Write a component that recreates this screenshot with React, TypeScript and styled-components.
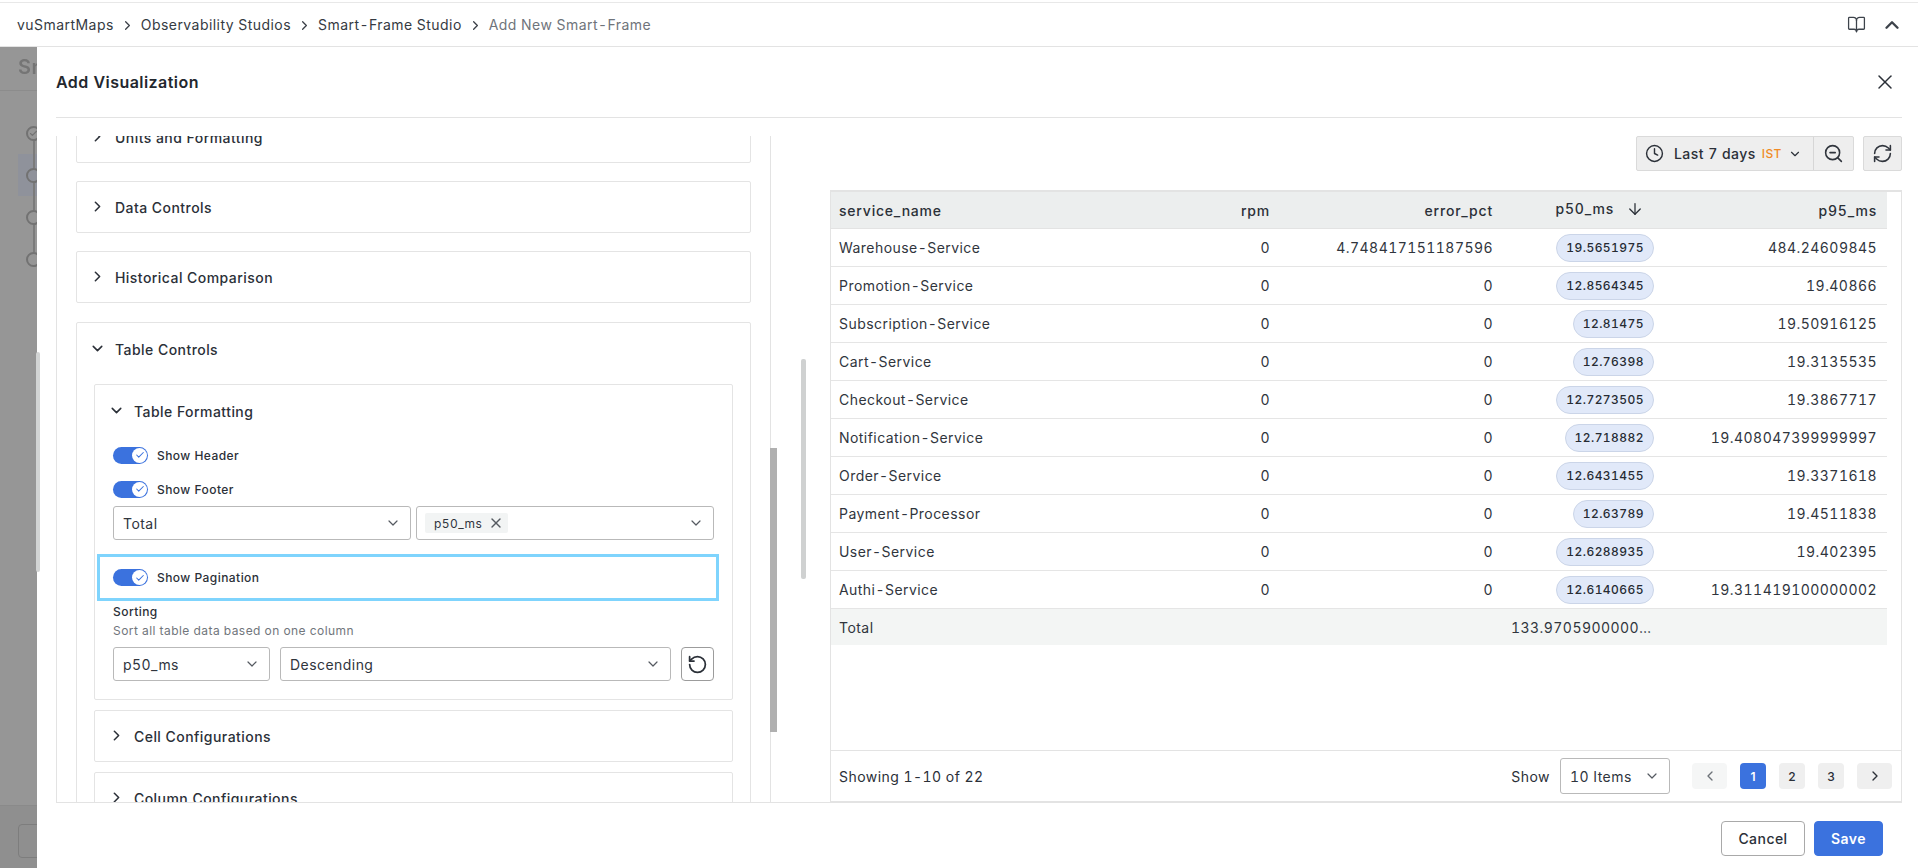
import { createGlobalStyle } from "styled-components";
import styled from "styled-components";
import { ArrowDown, BookOpen, Check, ChevronDown, ChevronLeft, ChevronRight, ChevronUp, Clock, RefreshCw, RotateCcw, X, ZoomOut } from "lucide-react";

const rows = [
  { name: "Warehouse-Service", err: "4.748417151187596", p50: "19.5651975", p95: "484.24609845" },
  { name: "Promotion-Service", err: "0", p50: "12.8564345", p95: "19.40866" },
  { name: "Subscription-Service", err: "0", p50: "12.81475", p95: "19.50916125" },
  { name: "Cart-Service", err: "0", p50: "12.76398", p95: "19.3135535" },
  { name: "Checkout-Service", err: "0", p50: "12.7273505", p95: "19.3867717" },
  { name: "Notification-Service", err: "0", p50: "12.718882", p95: "19.408047399999997" },
  { name: "Order-Service", err: "0", p50: "12.6431455", p95: "19.3371618" },
  { name: "Payment-Processor", err: "0", p50: "12.63789", p95: "19.4511838" },
  { name: "User-Service", err: "0", p50: "12.6288935", p95: "19.402395" },
  { name: "Authi-Service", err: "0", p50: "12.6140665", p95: "19.311419100000002" },
];

const GlobalStyle = createGlobalStyle`
  html, body {
    margin: 0;
    height: 100%;
    overflow: hidden;
    background: #fff;
  }
  * {
    box-sizing: border-box;
  }
  body {
    font-family: Inter, "Noto Sans", sans-serif;
    font-size: 14px;
    letter-spacing: 0.45px;
    font-variant-numeric: tabular-nums;
    color: #2b3038;
  }
`;

const Page = styled.div`
  display: flex;
  flex-direction: column;
  width: 1918px;
  height: 868px;
`;

const TopBar = styled.header`
  display: flex;
  align-items: center;
  justify-content: space-between;
  height: 45px;
  margin-top: 2px;
  padding: 0 15px 0 17px;
  border-top: 1px solid #e8e8e8;
  border-bottom: 1px solid #e3e3e3;
  flex-shrink: 0;
`;

const Crumbs = styled.nav`
  display: flex;
  align-items: center;
  gap: 6px;
  color: #353a42;
  svg {
    color: #3a3f47;
    margin-top: 2px;
  }
`;

const CrumbLast = styled.span`
  color: #6f747b;
`;

const TopIcons = styled.div`
  display: flex;
  align-items: center;
  gap: 15px;
  color: #3d434b;
`;

const Main = styled.div`
  display: flex;
  flex: 1;
  min-height: 0;
`;

const Backdrop = styled.aside`
  display: flex;
  flex-direction: column;
  width: 37px;
  flex-shrink: 0;
  overflow: hidden;
  background: #969696;
  filter: blur(0.6px);
`;

const BackdropTitle = styled.div`
  height: 44px;
  padding: 8px 0 0 18px;
  font-size: 20px;
  font-weight: 600;
  color: #757575;
  white-space: nowrap;
  border-bottom: 1px solid #8c8c8c;
`;

const Steps = styled.div`
  display: flex;
  flex-direction: column;
  flex: 1;
  padding-top: 21px;
`;

const Step = styled.div<{ $active?: boolean }>`
  display: flex;
  align-items: center;
  height: 42px;
  padding-left: 9px;
  margin-left: 18px;
  width: 40px;
  background: ${(p) => (p.$active ? "#8f929b" : "transparent")};
`;

const StepRing = styled.span<{ $last?: boolean }>`
  position: relative;
  display: flex;
  align-items: center;
  justify-content: center;
  width: 15px;
  height: 15px;
  flex-shrink: 0;
  margin-left: -1px;
  border: 2px solid #727272;
  border-radius: 50%;
  color: #727272;
  &::after {
    content: "";
    display: ${(p) => (p.$last ? "none" : "block")};
    position: absolute;
    left: 4.5px;
    top: 13px;
    width: 2px;
    height: 27px;
    background: #7b7b7b;
  }
`;

const BackdropFoot = styled.div`
  height: 63px;
  padding: 18px 0 0 18px;
  border-top: 1px solid #8a8a8a;
  background: #8f8f8f;
`;

const BackdropButton = styled.div`
  width: 40px;
  height: 34px;
  border: 1px solid #7d7d7d;
  border-radius: 4px;
`;

const Modal = styled.section`
  position: relative;
  display: flex;
  flex-direction: column;
  flex: 1;
  min-width: 0;
  padding: 0 16px 0 19px;
  background: #fff;
`;

const OuterThumb = styled.div`
  position: absolute;
  left: -1px;
  top: 305px;
  width: 4px;
  height: 220px;
  border-radius: 2px;
  background: #d2d4d4;
`;

const ModalHeader = styled.div`
  display: flex;
  align-items: center;
  justify-content: space-between;
  height: 71px;
  padding-right: 5px;
  flex-shrink: 0;
  border-bottom: 1px solid #e3e3e3;
`;

const ModalTitle = styled.h2`
  margin: 0;
  font-size: 16px;
  font-weight: 600;
  color: #23272e;
`;

const ModalBody = styled.div`
  display: flex;
  height: 685px;
  flex-shrink: 0;
  border-bottom: 1px solid #e3e3e3;
`;

const LeftColumn = styled.div`
  position: relative;
  width: 715px;
  margin-top: 18px;
  flex-shrink: 0;
`;

const LeftScroll = styled.div`
  height: 100%;
  overflow: hidden;
  padding: 0 19px;
  border-left: 1px solid #e3e3e3;
  border-right: 1px solid #e3e3e3;
`;

const LeftInner = styled.div`
  display: flex;
  flex-direction: column;
  gap: 18px;
  margin-top: -25px;
`;

const LeftThumb = styled.div`
  position: absolute;
  top: 312px;
  right: -6px;
  width: 7px;
  height: 284px;
  background: #b0b0b0;
`;

const Card = styled.div<{ $nested?: boolean }>`
  padding: ${(p) => (p.$nested ? "0 18px" : "0 17px")};
  border: 1px solid #e4e4e4;
  border-radius: 2px;
  background: #fff;
`;

const OpenCard = styled(Card)`
  margin-top: 1px;
`;

const CardHead = styled.div<{ $height: number; $gapBelow?: number }>`
  display: flex;
  align-items: center;
  gap: 9px;
  height: ${(p) => p.$height}px;
  margin-bottom: ${(p) => p.$gapBelow ?? 0}px;
  margin-left: -5px;
  font-size: 14px;
  font-weight: 500;
  color: #2b3038;
  svg {
    flex-shrink: 0;
    margin-top: -2px;
  }
`;

const NestedStack = styled.div`
  display: flex;
  flex-direction: column;
  gap: 10px;
`;

const ToggleRow = styled.div<{ $boxed?: boolean }>`
  display: flex;
  align-items: center;
  gap: 9px;
  height: ${(p) => (p.$boxed ? "47px" : "34px")};
  font-size: 12px;
  font-weight: 500;
  ${(p) =>
    p.$boxed &&
    `
    margin: 14px -5px 0 -16px;
    padding-left: 13px;
    border: 3px solid #7fd4fd;
  `}
`;

const ToggleTrack = styled.span`
  display: flex;
  align-items: center;
  justify-content: flex-end;
  width: 35px;
  height: 17px;
  padding-right: 1px;
  border-radius: 9px;
  background: #3b72de;
`;

const ToggleKnob = styled.span`
  display: flex;
  align-items: center;
  justify-content: center;
  width: 15px;
  height: 15px;
  border-radius: 50%;
  background: #fff;
  color: #3b72de;
`;

const SelectRow = styled.div`
  display: flex;
  gap: 5px;
`;

const SortRow = styled.div`
  display: flex;
  gap: 10px;
  margin-top: 8px;
`;

const Select = styled.div<{ $width?: number }>`
  display: flex;
  align-items: center;
  justify-content: space-between;
  ${(p) => (p.$width ? `width: ${p.$width}px; flex-shrink: 0;` : "flex: 1;")}
  min-width: 0;
  height: 34px;
  padding: 0 9px;
  border: 1px solid #b9b9b9;
  border-radius: 3px;
  font-size: 14px;
  color: #30353d;
  svg {
    color: #555a61;
    flex-shrink: 0;
  }
`;

const Chip = styled.span`
  display: inline-flex;
  align-items: center;
  gap: 6px;
  height: 20px;
  margin-left: -1px;
  padding: 0 4px 0 9px;
  border-radius: 2px;
  background: #f2f4f4;
  font-size: 12px;
`;

const SortingTitle = styled.div`
  margin-top: 3px;
  font-size: 12px;
  font-weight: 500;
  line-height: 16px;
`;

const SortingHint = styled.div`
  margin-top: 3px;
  font-size: 12px;
  line-height: 16px;
  color: #71767c;
`;

const SquareButton = styled.button`
  display: flex;
  align-items: center;
  justify-content: center;
  width: 33px;
  height: 34px;
  flex-shrink: 0;
  padding: 0;
  border: 1px solid #9c9c9c;
  border-radius: 4px;
  background: #fff;
  color: #2b3038;
`;

const CardEnd = styled.div`
  height: 18px;
`;

const RightThumb = styled.div`
  position: absolute;
  left: 764px;
  top: 312px;
  width: 5px;
  height: 220px;
  border-radius: 2px;
  background: #cfd1d1;
`;

const RightColumn = styled.div`
  display: flex;
  flex-direction: column;
  width: 1072px;
  margin-left: 59px;
  padding-top: 18px;
  flex-shrink: 0;
`;

const Toolbar = styled.div`
  display: flex;
  justify-content: flex-end;
  gap: 9px;
  height: 36px;
  margin-bottom: 18px;
`;

const TimePicker = styled.div`
  display: flex;
  align-items: center;
  height: 35px;
  border: 1px solid #dadada;
  border-radius: 2px;
  background: #eeeeee;
`;

const TimeRange = styled.div`
  display: flex;
  align-items: center;
  width: 177px;
  height: 100%;
  padding-left: 8px;
  border-right: 1px solid #d6d6d6;
  font-weight: 500;
  white-space: nowrap;
  svg:first-child {
    margin-right: 10px;
  }
`;

const Zone = styled.span`
  margin: 0 6px;
  font-size: 12px;
  color: #f08a24;
`;

const ToolIcon = styled.div`
  display: flex;
  align-items: center;
  justify-content: center;
  width: 39px;
  height: 100%;
  color: #30353d;
`;

const RefreshBox = styled(ToolIcon)`
  height: 35px;
  border: 1px solid #dadada;
  border-radius: 2px;
  background: #eeeeee;
`;

const TablePanel = styled.div`
  display: flex;
  flex-direction: column;
  flex: 1;
  min-height: 0;
  border: 1px solid #e3e3e3;
  border-top-width: 2px;
`;

const TableArea = styled.div`
  flex: 1;
  min-height: 0;
`;

const Table = styled.table`
  width: 1056px;
  table-layout: fixed;
  border-collapse: separate;
  border-spacing: 0;
`;

const Th = styled.th<{ $align?: string }>`
  height: 37px;
  padding: 0 10px 0 8px;
  background: #eceeee;
  border-bottom: 1px solid #e3e3e3;
  font-size: 14px;
  font-weight: 500;
  letter-spacing: 0.8px;
  text-align: ${(p) => p.$align ?? "right"};
  color: #2b3038;
`;

const SortArrow = styled.span`
  display: inline-block;
  margin-left: 12px;
  margin-right: 9px;
  vertical-align: -4px;
`;

const Td = styled.td<{ $align?: string }>`
  height: 38px;
  padding: 0 10px 0 8px;
  border-bottom: 1px solid #e5e5e5;
  text-align: ${(p) => p.$align ?? "right"};
  font-size: 14px;
  color: #30353d;
  white-space: nowrap;
`;

const Pill = styled.span`
  display: inline-block;
  height: 28px;
  padding: 0 9px;
  margin-right: -1px;
  border: 1px solid #cbd5e8;
  border-radius: 14px;
  background: #e1e9f9;
  font-size: 12px;
  font-weight: 500;
  line-height: 26px;
  color: #262b33;
`;

const FootCell = styled.td<{ $align?: string }>`
  height: 36px;
  max-width: 0;
  padding: 0 10px 0 8px;
  background: #f3f5f4;
  text-align: ${(p) => p.$align ?? "right"};
  font-size: 14px;
  color: #30353d;
  white-space: nowrap;
  overflow: hidden;
  text-overflow: ellipsis;
`;

const PagerBar = styled.div`
  display: flex;
  align-items: center;
  justify-content: space-between;
  height: 51px;
  padding: 0 9px 0 8px;
  border-top: 1px solid #e3e3e3;
  flex-shrink: 0;
`;

const PagerRight = styled.div`
  display: flex;
  align-items: center;
`;

const ShowLabel = styled.span`
  margin-right: 10px;
`;

const PageSize = styled(Select)`
  flex: none;
  width: 110px;
  height: 36px;
  margin-right: 22px;
`;

const PageButton = styled.button<{ $active?: boolean; $muted?: boolean; $wide?: boolean }>`
  display: flex;
  align-items: center;
  justify-content: center;
  width: ${(p) => (p.$wide ? "35px" : "26px")};
  height: 26px;
  margin-right: 13px;
  padding: 0;
  border: 0;
  border-radius: 4px;
  background: ${(p) => (p.$active ? "#3b72de" : p.$muted ? "#f5f6f6" : "#efefef")};
  color: ${(p) => (p.$active ? "#fff" : p.$muted ? "#6d7278" : "#2b3038")};
  font-family: inherit;
  font-size: 12px;
  font-weight: ${(p) => (p.$active ? 600 : 500)};
  &:last-child {
    margin-right: 0;
  }
`;

const ModalFooter = styled.footer`
  display: flex;
  justify-content: flex-end;
  gap: 9px;
  padding: 18px 19px 0 0;
`;

const FooterButton = styled.button<{ $primary?: boolean }>`
  height: 35px;
  width: ${(p) => (p.$primary ? "69px" : "84px")};
  padding: 0;
  border: 1px solid ${(p) => (p.$primary ? "#3b72de" : "#a9a9a9")};
  border-radius: 4px;
  background: ${(p) => (p.$primary ? "#3b72de" : "#fff")};
  color: ${(p) => (p.$primary ? "#fff" : "#2b3038")};
  font-family: inherit;
  font-size: 14px;
  letter-spacing: 0.45px;
  font-weight: ${(p) => (p.$primary ? 600 : 500)};
`;

const Toggle = () => (
  <ToggleTrack>
    <ToggleKnob>
      <Check size={10} strokeWidth={2.5} />
    </ToggleKnob>
  </ToggleTrack>
);

const Section = ({ title, open }: { title: string; open?: boolean }) => (
  <CardHead $height={open ? 53 : 50}>
    {open ? <ChevronDown size={17} strokeWidth={2.2} /> : <ChevronRight size={17} strokeWidth={2.2} />}
    {title}
  </CardHead>
);

const App = () => {
  return (
    <Page>
      <GlobalStyle />
      <TopBar>
        <Crumbs>
          <span>vuSmartMaps</span>
          <ChevronRight size={15} />
          <span>Observability Studios</span>
          <ChevronRight size={15} />
          <span>Smart-Frame Studio</span>
          <ChevronRight size={15} />
          <CrumbLast>Add New Smart-Frame</CrumbLast>
        </Crumbs>
        <TopIcons>
          <BookOpen size={19} strokeWidth={1.6} />
          <ChevronUp size={22} strokeWidth={2.6} />
        </TopIcons>
      </TopBar>
      <Main>
        <Backdrop>
          <BackdropTitle>Smart</BackdropTitle>
          <Steps>
            <Step>
              <StepRing>
                <Check size={9} strokeWidth={3} />
              </StepRing>
            </Step>
            <Step $active>
              <StepRing />
            </Step>
            <Step>
              <StepRing />
            </Step>
            <Step>
              <StepRing $last />
            </Step>
          </Steps>
          <BackdropFoot>
            <BackdropButton />
          </BackdropFoot>
        </Backdrop>
        <Modal>
          <OuterThumb />
          <ModalHeader>
            <ModalTitle>Add Visualization</ModalTitle>
            <X size={24} strokeWidth={1.5} />
          </ModalHeader>
          <ModalBody>
            <LeftColumn>
              <LeftScroll>
                <LeftInner>
                  <Card>
                    <Section title="Units and Formatting" />
                  </Card>
                  <Card>
                    <Section title="Data Controls" />
                  </Card>
                  <Card>
                    <Section title="Historical Comparison" />
                  </Card>
                  <OpenCard>
                    <CardHead $height={52} $gapBelow={9}>
                      <ChevronDown size={17} strokeWidth={2.2} />
                      Table Controls
                    </CardHead>
                    <NestedStack>
                      <Card $nested>
                        <Section title="Table Formatting" open />
                        <ToggleRow>
                          <Toggle />
                          Show Header
                        </ToggleRow>
                        <ToggleRow>
                          <Toggle />
                          Show Footer
                        </ToggleRow>
                        <SelectRow>
                          <Select>
                            Total
                            <ChevronDown size={16} strokeWidth={1.8} />
                          </Select>
                          <Select>
                            <Chip>
                              p50_ms
                              <X size={16} strokeWidth={2} />
                            </Chip>
                            <ChevronDown size={16} strokeWidth={1.8} />
                          </Select>
                        </SelectRow>
                        <ToggleRow $boxed>
                          <Toggle />
                          Show Pagination
                        </ToggleRow>
                        <SortingTitle>Sorting</SortingTitle>
                        <SortingHint>Sort all table data based on one column</SortingHint>
                        <SortRow>
                          <Select $width={157}>
                            p50_ms
                            <ChevronDown size={16} strokeWidth={1.8} />
                          </Select>
                          <Select>
                            Descending
                            <ChevronDown size={16} strokeWidth={1.8} />
                          </Select>
                          <SquareButton>
                            <RotateCcw size={21} strokeWidth={2} />
                          </SquareButton>
                        </SortRow>
                        <CardEnd />
                      </Card>
                      <Card $nested>
                        <Section title="Cell Configurations" />
                      </Card>
                      <Card $nested>
                        <Section title="Column Configurations" />
                      </Card>
                    </NestedStack>
                  </OpenCard>
                </LeftInner>
              </LeftScroll>
              <LeftThumb />
            </LeftColumn>
            <RightColumn>
              <Toolbar>
                <TimePicker>
                  <TimeRange>
                    <Clock size={19} strokeWidth={1.8} />
                    Last 7 days
                    <Zone>IST</Zone>
                    <ChevronDown size={14} strokeWidth={2} />
                  </TimeRange>
                  <ToolIcon>
                    <ZoomOut size={21} strokeWidth={1.8} />
                  </ToolIcon>
                </TimePicker>
                <RefreshBox>
                  <RefreshCw size={21} strokeWidth={1.8} />
                </RefreshBox>
              </Toolbar>
              <TablePanel>
                <TableArea>
                  <Table>
                    <colgroup>
                      <col style={{ width: 349 }} />
                      <col style={{ width: 100 }} />
                      <col style={{ width: 223 }} />
                      <col style={{ width: 160 }} />
                      <col style={{ width: 224 }} />
                    </colgroup>
                    <thead>
                      <tr>
                        <Th $align="left">service_name</Th>
                        <Th>rpm</Th>
                        <Th>error_pct</Th>
                        <Th>
                          p50_ms
                          <SortArrow>
                            <ArrowDown size={18} strokeWidth={1.7} />
                          </SortArrow>
                        </Th>
                        <Th>p95_ms</Th>
                      </tr>
                    </thead>
                    <tbody>
                      {rows.map((row) => (
                        <tr key={row.name}>
                          <Td $align="left">{row.name}</Td>
                          <Td>0</Td>
                          <Td>{row.err}</Td>
                          <Td>
                            <Pill>{row.p50}</Pill>
                          </Td>
                          <Td>{row.p95}</Td>
                        </tr>
                      ))}
                    </tbody>
                    <tfoot>
                      <tr>
                        <FootCell $align="left">Total</FootCell>
                        <FootCell />
                        <FootCell />
                        <FootCell>133.97059000000002</FootCell>
                        <FootCell />
                      </tr>
                    </tfoot>
                  </Table>
                </TableArea>
                <PagerBar>
                  <span>Showing 1-10 of 22</span>
                  <PagerRight>
                    <ShowLabel>Show</ShowLabel>
                    <PageSize>
                      10 Items
                      <ChevronDown size={16} strokeWidth={1.8} />
                    </PageSize>
                    <PageButton $wide $muted>
                      <ChevronLeft size={16} />
                    </PageButton>
                    <PageButton $active>1</PageButton>
                    <PageButton>2</PageButton>
                    <PageButton>3</PageButton>
                    <PageButton $wide>
                      <ChevronRight size={16} />
                    </PageButton>
                  </PagerRight>
                </PagerBar>
              </TablePanel>
            </RightColumn>
            <RightThumb />
          </ModalBody>
          <ModalFooter>
            <FooterButton>Cancel</FooterButton>
            <FooterButton $primary>Save</FooterButton>
          </ModalFooter>
        </Modal>
      </Main>
    </Page>
  );
};

export default App;
